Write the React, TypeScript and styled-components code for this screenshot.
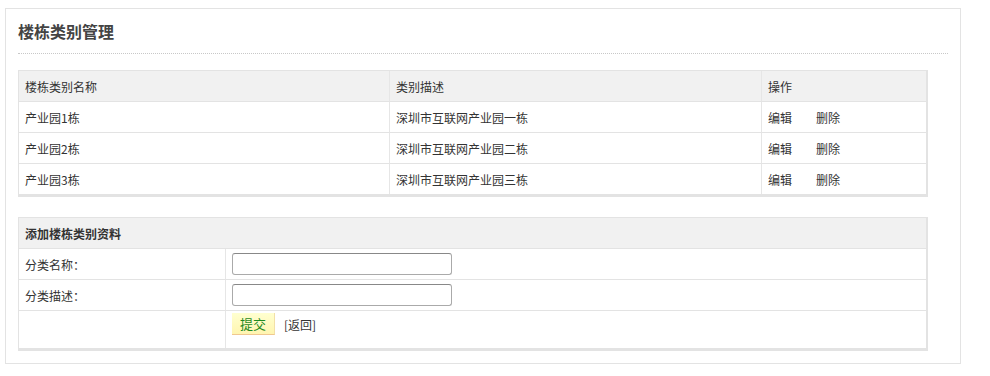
import React from "react";
import styled, { createGlobalStyle } from "styled-components";

const Global = createGlobalStyle`
  html, body { margin: 0; padding: 0; background: #fff; }
  body {
    font-family: "Noto Sans CJK SC", "Noto Sans", "Liberation Sans", sans-serif;
    font-size: 12px;
    color: #333;
  }
`;

const Page = styled.div`
  padding: 8px 0 0 5px;
`;

const Panel = styled.div`
  width: 956px;
  border: 1px solid #e3e3e3;
  padding: 0 12px 12px 12px;
  box-sizing: border-box;
`;

const Title = styled.h2`
  margin: 0;
  height: 44px;
  line-height: 44px;
  font-size: 16px;
  font-weight: 600;
  color: #444;
  border-bottom: 1px dotted #c8c8c8;
`;

const Table = styled.table<{ $top: number }>`
  width: 910px;
  margin-top: ${(p) => p.$top}px;
  border-collapse: separate;
  border-spacing: 0;
  border-top: 1px solid #e3e3e3;
  border-left: 1px solid #e3e3e3;
  border-right: 2px solid #e3e3e3;
  border-bottom: 3px solid #e3e3e3;
  table-layout: fixed;
`;

const Th = styled.th<{ $w?: number; $bold?: boolean }>`
  width: ${(p) => (p.$w ? `${p.$w}px` : "auto")};
  height: 30px;
  padding: 0 6px;
  background: #f1f1f1;
  text-align: left;
  font-weight: ${(p) => (p.$bold ? 700 : 400)};
  color: #333;
  border-bottom: 1px solid #e3e3e3;
  & + & { border-left: 1px solid #e6e6e6; }
`;

const PlainTh = styled(Th)`
  & + & { border-left: none; }
`;

const Td = styled.td<{ $h?: number; $top?: boolean }>`
  height: ${(p) => p.$h ?? 30}px;
  padding: ${(p) => (p.$top ? "2px 6px 0" : "0 6px")};
  border-bottom: 1px solid #e3e3e3;
  vertical-align: ${(p) => (p.$top ? "top" : "middle")};
  & + & { border-left: 1px solid #e6e6e6; }
  tr:last-child > & { border-bottom: none; }
`;

const Action = styled.a`
  color: #333;
  text-decoration: none;
  margin-right: 24px;
`;

const Input = styled.input`
  display: block;
  width: 220px;
  height: 22px;
  box-sizing: border-box;
  border: 1px solid #aaa;
  border-top-color: #888;
  border-radius: 3px;
  background: #fff;
  outline: none;
`;

const ButtonRow = styled.div`
  display: flex;
  align-items: center;
  gap: 9px;
`;

const Submit = styled.button`
  width: 43px;
  height: 22px;
  padding: 0;
  border: none;
  border-bottom: 1px solid #f0c890;
  border-right: 1px solid #f2e0a8;
  background: linear-gradient(#ffffd0, #fff5b0);
  color: #1f8a1f;
  font-family: inherit;
  font-size: 13px;
  cursor: pointer;
`;

const Back = styled.a`
  color: #333;
  text-decoration: none;
  font-size: 12px;
`;

const rows = [
  { name: "产业园1栋", desc: "深圳市互联网产业园一栋" },
  { name: "产业园2栋", desc: "深圳市互联网产业园二栋" },
  { name: "产业园3栋", desc: "深圳市互联网产业园三栋" },
];

export default function App() {
  return (
    <>
      <Global />
      <Page>
        <Panel>
          <Title>楼栋类别管理</Title>
          <Table $top={16}>
            <thead>
              <tr>
                <Th $w={358}>楼栋类别名称</Th>
                <Th $w={359}>类别描述</Th>
                <Th>操作</Th>
              </tr>
            </thead>
            <tbody>
              {rows.map((r) => (
                <tr key={r.name}>
                  <Td>{r.name}</Td>
                  <Td>{r.desc}</Td>
                  <Td>
                    <Action href="#">编辑</Action>
                    <Action href="#">删除</Action>
                  </Td>
                </tr>
              ))}
            </tbody>
          </Table>
          <Table $top={20}>
            <thead>
              <tr>
                <PlainTh $w={194} $bold>添加楼栋类别资料</PlainTh>
                <PlainTh />
              </tr>
            </thead>
            <tbody>
              <tr>
                <Td>分类名称：</Td>
                <Td>
                  <Input type="text" />
                </Td>
              </tr>
              <tr>
                <Td>分类描述：</Td>
                <Td>
                  <Input type="text" />
                </Td>
              </tr>
              <tr>
                <Td $h={35} $top></Td>
                <Td $h={35} $top>
                  <ButtonRow>
                    <Submit>提交</Submit>
                    <Back href="#">[返回]</Back>
                  </ButtonRow>
                </Td>
              </tr>
            </tbody>
          </Table>
        </Panel>
      </Page>
    </>
  );
}
